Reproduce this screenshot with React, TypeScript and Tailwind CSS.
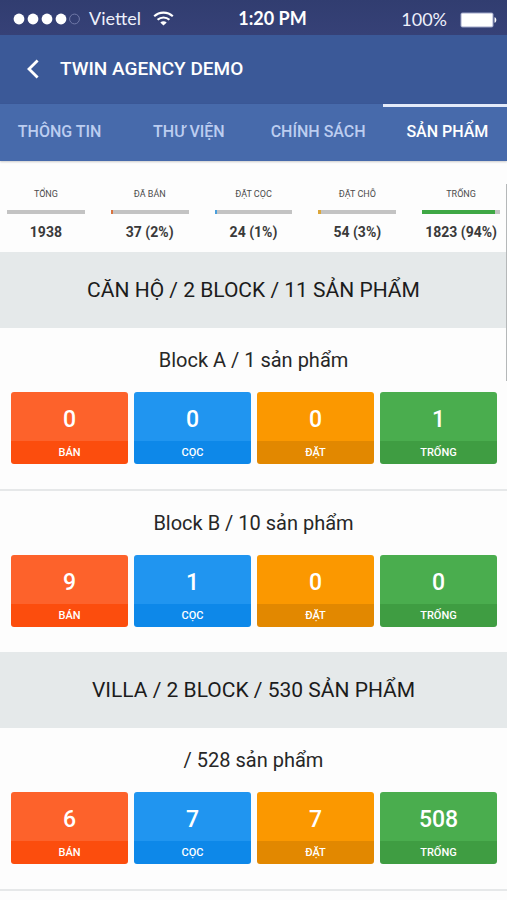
type Stat = { label: string; value: string; percent: number; bar: string };

const stats: Stat[] = [
  { label: "TỔNG", value: "1938", percent: 0, bar: "bg-[#c3c3c3]" },
  { label: "ĐÃ BÁN", value: "37 (2%)", percent: 2, bar: "bg-[#d9733f]" },
  { label: "ĐẶT CỌC", value: "24 (1%)", percent: 1, bar: "bg-[#4a9fdc]" },
  { label: "ĐẶT CHỖ", value: "54 (3%)", percent: 3, bar: "bg-[#dba63a]" },
  { label: "TRỐNG", value: "1823 (94%)", percent: 94, bar: "bg-[#3fa845]" },
];

const tabs = ["THÔNG TIN", "THƯ VIỆN", "CHÍNH SÁCH", "SẢN PHẨM"];

const kinds = [
  { label: "BÁN", top: "bg-[#fd622b]", bottom: "bg-[#fc4d0d]" },
  { label: "CỌC", top: "bg-[#2095f0]", bottom: "bg-[#0d88e9]" },
  { label: "ĐẶT", top: "bg-[#fb9800]", bottom: "bg-[#e28800]" },
  { label: "TRỐNG", top: "bg-[#4aad4e]", bottom: "bg-[#3f9d42]" },
];

const groups = [
  {
    title: "CĂN HỘ / 2 BLOCK / 11 SẢN PHẨM",
    blocks: [
      { title: "Block A / 1 sản phẩm", counts: [0, 0, 0, 1], divider: true },
      { title: "Block B / 10 sản phẩm", counts: [9, 1, 0, 0], divider: false },
    ],
  },
  {
    title: "VILLA / 2 BLOCK / 530 SẢN PHẨM",
    blocks: [{ title: "/ 528 sản phẩm", counts: [6, 7, 7, 508], divider: true }],
  },
];

function StatusBar() {
  return (
    <div className="flex h-[35px] items-center bg-linear-to-b from-[#313d70] to-[#364177] pt-[2px] font-['Lato',sans-serif] text-[18px] text-[#eef0fb]">
      <div className="flex w-[47%] items-center pl-[13px]">
        <svg width="68" height="12" viewBox="0 0 68 12" aria-hidden="true">
          {[6, 20, 34, 48].map((x) => (
            <circle key={x} cx={x} cy="6" r="5.4" fill="#fff" />
          ))}
          <circle cx="61.5" cy="6" r="4.9" fill="none" stroke="#7079a8" strokeWidth="1" />
        </svg>
        <span className="ml-[8px]">Viettel</span>
        <svg className="ml-[12px]" width="21" height="15" viewBox="0 0 21 15" aria-hidden="true">
          <g fill="none" stroke="#fff" strokeWidth="2.1">
            <path d="M1.2 5.3C6.3.4 14.7.4 19.8 5.3" />
            <path d="M4.6 8.8c3.3-3.1 8.5-3.1 11.8 0" />
          </g>
          <path d="M7.3 11.4c1.8-1.7 4.6-1.7 6.4 0L10.5 14.6z" fill="#fff" />
        </svg>
      </div>
      <span className="font-bold text-white">1:20 PM</span>
      <div className="flex flex-1 items-center justify-end pt-[2px] pr-[10px]">
        <span>100%</span>
        <svg className="ml-[13px]" width="37" height="16" viewBox="0 0 37 16" aria-hidden="true">
          <rect x=".5" y=".5" width="33" height="15" rx="2" fill="#9ea5c8" />
          <rect x="1.5" y="1.5" width="31" height="13" rx="1" fill="#fff" />
          <path d="M34.5 5.2c2.4.5 2.4 5.1 0 5.6z" fill="#fff" />
        </svg>
      </div>
    </div>
  );
}

function Header() {
  return (
    <header className="flex h-[69px] items-center bg-[#3b5998] pb-[2px] pl-[20px] text-white">
      <button type="button" aria-label="Back" className="flex h-[32px] w-[40px] items-center pl-[7px]">
        <svg width="12" height="20" viewBox="0 0 12 20" fill="none" stroke="currentColor" strokeWidth="2.8" aria-hidden="true">
          <path d="M10.6 1.4 2 10l8.6 8.6" />
        </svg>
      </button>
      <h1 className="text-[19px] leading-[24px] font-medium">TWIN AGENCY DEMO</h1>
    </header>
  );
}

function Tabs() {
  return (
    <nav className="h-[57px] overflow-hidden bg-[#476aab] shadow-[0_1px_2px_#00000033]">
      <div className="-mx-[5px] grid h-full grid-cols-4">
        {tabs.map((tab, i) => (
          <button
            key={tab}
            type="button"
            className={
              i === 3
                ? "border-t-[3px] border-[#e4ebfa] pb-[4px] text-[16px] font-medium whitespace-nowrap text-white"
                : "border-t-[3px] border-transparent pb-[4px] text-[16px] font-medium whitespace-nowrap text-[#bccdf0]"
            }
          >
            {tab}
          </button>
        ))}
      </div>
    </nav>
  );
}

function Stats() {
  return (
    <section className="grid grid-cols-5 gap-[26px] px-[7px] pt-[26px] pb-[11px] text-center">
      {stats.map((s) => (
        <div key={s.label}>
          <div className="text-[9px] leading-[14px] text-[#4c4c4c]">{s.label}</div>
          <div className="mt-[9px] h-[4px] bg-[#c3c3c3]">
            <div className={`h-full min-w-[2px] ${s.bar}`} style={{ width: `${s.percent}%` }} />
          </div>
          <div className="mt-[9px] text-[14px] leading-[18px] font-bold whitespace-nowrap text-[#3a3a3a]">{s.value}</div>
        </div>
      ))}
    </section>
  );
}

function Block({ title, counts, divider }: { title: string; counts: number[]; divider: boolean }) {
  return (
    <section className={divider ? "border-b-2 border-[#e6e8e9] pb-[25px]" : "pb-[25px]"}>
      <h3 className="pt-[18px] pb-[18px] text-center text-[20px] leading-[28px] text-[#272727]">{title}</h3>
      <div className="grid grid-cols-4 gap-[6px] pr-[10px] pl-[11px]">
        {kinds.map((k, i) => (
          <button key={k.label} type="button" className="overflow-hidden rounded-[3px] text-center font-medium text-white">
            <span className={`block pt-[15px] pb-[8px] text-[23px] leading-[26px] ${k.top}`}>{counts[i]}</span>
            <span className={`block pt-[1px] text-[11px] leading-[22px] ${k.bottom}`}>{k.label}</span>
          </button>
        ))}
      </div>
    </section>
  );
}

export default function App() {
  return (
    <div className="relative h-screen overflow-hidden bg-[#fdfdfd] font-['Roboto',sans-serif]">
      <StatusBar />
      <Header />
      <Tabs />
      <main>
        <Stats />
        {groups.map((g) => (
          <section key={g.title}>
            <h2 className="bg-[#e5e9ea] py-[24px] text-center text-[21px] leading-[28px] text-[#1c1c1c]">{g.title}</h2>
            {g.blocks.map((b) => (
              <Block key={b.title} {...b} />
            ))}
          </section>
        ))}
      </main>
      <div className="absolute top-[184px] right-0 h-[197px] w-px bg-[#b5b8b9]" />
    </div>
  );
}
